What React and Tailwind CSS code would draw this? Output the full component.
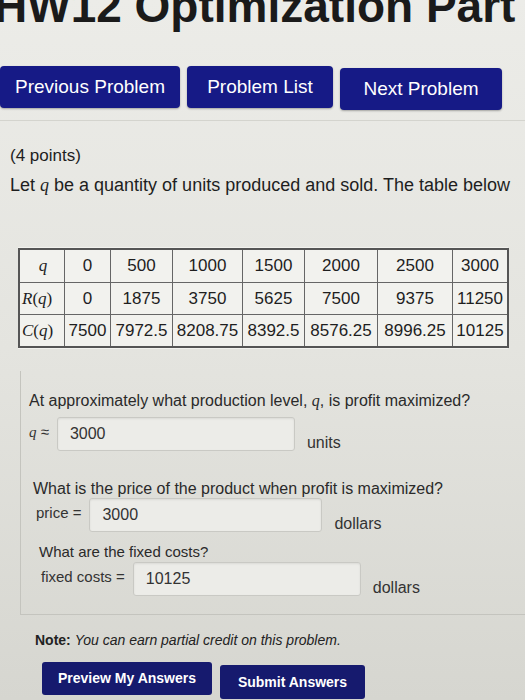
import React from "react";

const navBtn =
  "h-[42px] rounded-[4px] bg-[#161a86] text-white text-[19px] flex items-center justify-center shadow-[0_1px_2px_rgba(0,0,0,0.3)]";

const cols = [
  { w: "w-[44px]", q: "q", r: "R(q)", c: "C(q)", head: true },
  { w: "w-[46px]", q: "0", r: "0", c: "7500" },
  { w: "w-[62px]", q: "500", r: "1875", c: "7972.5" },
  { w: "w-[70px]", q: "1000", r: "3750", c: "8208.75" },
  { w: "w-[62px]", q: "1500", r: "5625", c: "8392.5" },
  { w: "w-[73px]", q: "2000", r: "7500", c: "8576.25" },
  { w: "w-[75px]", q: "2500", r: "9375", c: "8996.25" },
  { w: "w-[55px]", q: "3000", r: "11250", c: "10125" },
];

const Mq = ({ children }) => (
  <span className="italic" style={{ fontFamily: '"Liberation Serif", serif' }}>
    {children}
  </span>
);

const FnLabel = ({ f }) => (
  <span style={{ fontFamily: '"Liberation Serif", serif' }}>
    <span className="italic">{f}</span>(<span className="italic">q</span>)
  </span>
);

const AnswerRow = ({ label, value, unit, pl, inputW }) => (
  <div className={`flex items-start ${pl}`}>
    <span className="text-[15px] text-[#333] mt-[4px] mr-2">{label}</span>
    <div
      className={`${inputW} h-[34px] border border-[#c9c9c4] rounded-[3px] bg-[#ececE8] px-3 flex items-center text-[16px] text-[#333] shadow-[inset_0_1px_2px_rgba(0,0,0,0.08)]`}
    >
      {value}
    </div>
    <span className="text-[16px] text-[#333] mt-[14px] ml-3">{unit}</span>
  </div>
);

export default function App() {
  return (
    <div
      className="w-[525px] h-[700px] overflow-hidden bg-gradient-to-b from-[#ecece8] via-[#e4e4df] to-[#d6d6d0] text-[#1e1e1e]"
      style={{ fontFamily: '"Liberation Sans", Arial, sans-serif' }}
    >
      <h1 className="text-[46px] font-bold leading-none mt-[-17px] ml-[-6px] whitespace-nowrap text-[#1a1a1a]">
        HW12 Optimization Part
      </h1>

      <div className="flex gap-[7px] mt-[37px] ml-0">
        <div className={`${navBtn} w-[180px]`}>Previous Problem</div>
        <div className={`${navBtn} w-[146px]`}>Problem List</div>
        <div className={`${navBtn} w-[162px] mt-[2px]`}>Next Problem</div>
      </div>

      <div className="mt-[10px] border-t border-[#d4d4ce] pt-[24px] pl-[10px]">
        <div className="text-[17px] leading-[22px]">(4 points)</div>
        <div className="text-[18px] leading-[24px] mt-[6px] whitespace-nowrap">
          Let <Mq>q</Mq> be a quantity of units produced and sold. The table below
        </div>

        <div className="mt-[50px] ml-[8px] bg-[#f2f2ee] w-[490px] py-[1px]">
          <div className="flex border-2 border-[#555] w-max text-[17px]">
            {cols.map((col, i) => (
              <div
                key={i}
                className={`${col.w} flex flex-col ${i > 0 ? "border-l border-[#666]" : ""}`}
              >
                {[col.q, col.r, col.c].map((v, j) => (
                  <div
                    key={j}
                    className={`h-[32px] flex items-center ${col.head ? "justify-start pl-[2px]" : "justify-center"} ${j > 0 ? "border-t border-[#666]" : ""}`}
                  >
                    {col.head ? (
                      j === 0 ? (
                        <span className="w-full text-center">
                          <Mq>q</Mq>
                        </span>
                      ) : (
                        <FnLabel f={j === 1 ? "R" : "C"} />
                      )
                    ) : (
                      v
                    )}
                  </div>
                ))}
              </div>
            ))}
          </div>
        </div>
      </div>

      <div className="mt-[22px] ml-[20px] border-b border-l border-[#c4c4be] pb-[14px] pt-[18px]">
        <div className="pl-[8px] text-[16px] text-[#2a2a2a] whitespace-nowrap">
          At approximately what production level, <Mq>q</Mq>, is profit maximized?
        </div>
        <div className="mt-[4px]">
          <AnswerRow
            label={
              <span>
                <Mq>q</Mq> ≈
              </span>
            }
            value="3000"
            unit="units"
            pl="pl-[8px]"
            inputW="w-[238px]"
          />
        </div>

        <div className="pl-[12px] mt-[24px] text-[16px] leading-[20px] text-[#2a2a2a]">
          What is the price of the product when profit is maximized?
        </div>
        <div className="mt-[-1px]">
          <AnswerRow label="price =" value="3000" unit="dollars" pl="pl-[15px]" inputW="w-[233px]" />
        </div>

        <div className="pl-[18px] mt-[6px] text-[15px] leading-[20px] text-[#2a2a2a]">
          What are the fixed costs?
        </div>
        <div className="mt-0">
          <AnswerRow
            label="fixed costs ="
            value="10125"
            unit="dollars"
            pl="pl-[20px]"
            inputW="w-[228px]"
          />
        </div>
      </div>

      <div className="ml-[35px] mt-[17px] text-[14px] leading-[16px] text-[#222] whitespace-nowrap">
        <span className="font-bold">Note:</span> <span className="italic">You can earn partial credit on this problem.</span>
      </div>

      <div className="flex gap-[8px] ml-[42px] mt-[14px]">
        <div className="w-[170px] h-[33px] rounded-[3px] bg-[#161a6e] text-white text-[14px] font-bold flex items-center justify-center">
          Preview My Answers
        </div>
        <div className="w-[145px] h-[34px] mt-[3px] rounded-[3px] bg-[#161a6e] text-white text-[14px] font-bold flex items-center justify-center">
          Submit Answers
        </div>
      </div>
    </div>
  );
}
